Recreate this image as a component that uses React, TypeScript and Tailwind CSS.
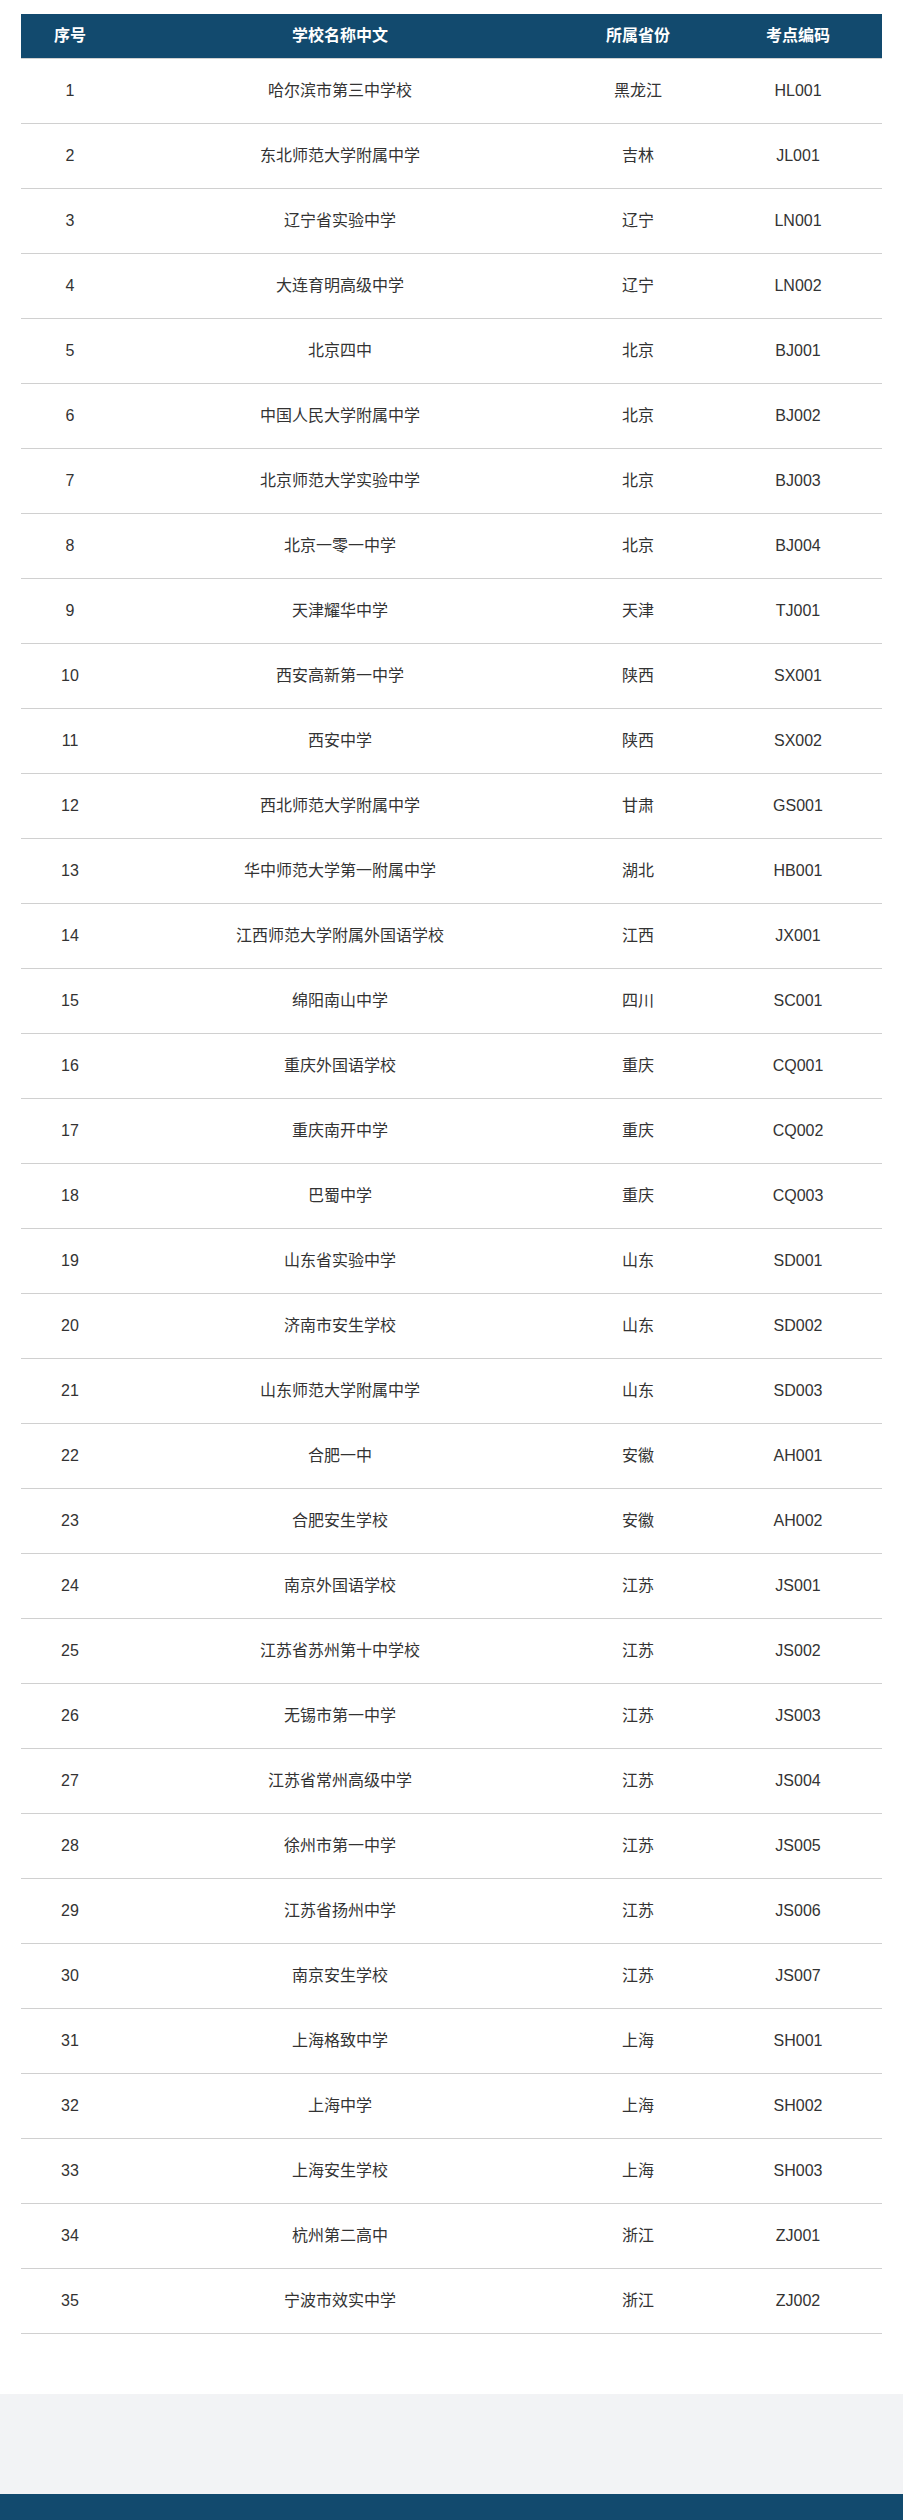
const schools: [string, string, string][] = [
  ["哈尔滨市第三中学校", "黑龙江", "HL001"],
  ["东北师范大学附属中学", "吉林", "JL001"],
  ["辽宁省实验中学", "辽宁", "LN001"],
  ["大连育明高级中学", "辽宁", "LN002"],
  ["北京四中", "北京", "BJ001"],
  ["中国人民大学附属中学", "北京", "BJ002"],
  ["北京师范大学实验中学", "北京", "BJ003"],
  ["北京一零一中学", "北京", "BJ004"],
  ["天津耀华中学", "天津", "TJ001"],
  ["西安高新第一中学", "陕西", "SX001"],
  ["西安中学", "陕西", "SX002"],
  ["西北师范大学附属中学", "甘肃", "GS001"],
  ["华中师范大学第一附属中学", "湖北", "HB001"],
  ["江西师范大学附属外国语学校", "江西", "JX001"],
  ["绵阳南山中学", "四川", "SC001"],
  ["重庆外国语学校", "重庆", "CQ001"],
  ["重庆南开中学", "重庆", "CQ002"],
  ["巴蜀中学", "重庆", "CQ003"],
  ["山东省实验中学", "山东", "SD001"],
  ["济南市安生学校", "山东", "SD002"],
  ["山东师范大学附属中学", "山东", "SD003"],
  ["合肥一中", "安徽", "AH001"],
  ["合肥安生学校", "安徽", "AH002"],
  ["南京外国语学校", "江苏", "JS001"],
  ["江苏省苏州第十中学校", "江苏", "JS002"],
  ["无锡市第一中学", "江苏", "JS003"],
  ["江苏省常州高级中学", "江苏", "JS004"],
  ["徐州市第一中学", "江苏", "JS005"],
  ["江苏省扬州中学", "江苏", "JS006"],
  ["南京安生学校", "江苏", "JS007"],
  ["上海格致中学", "上海", "SH001"],
  ["上海中学", "上海", "SH002"],
  ["上海安生学校", "上海", "SH003"],
  ["杭州第二高中", "浙江", "ZJ001"],
  ["宁波市效实中学", "浙江", "ZJ002"],
];

const cols = "grid grid-cols-[98px_442px_154px_166px]";

export default function App() {
  return (
    <div className="min-h-[2520px] bg-white font-['Liberation_Sans','Noto_Sans_CJK_SC',sans-serif] text-[16px] text-[#333]">
      <div className="px-[21px] pt-[14px] pb-[60px]">
        <div className={`${cols} h-[45px] bg-[#124a6e] border-b border-[#d0d0d0] text-white font-bold`}>
          <div className="flex items-center justify-center">序号</div>
          <div className="flex items-center justify-center">学校名称中文</div>
          <div className="flex items-center justify-center">所属省份</div>
          <div className="flex items-center justify-center">考点编码</div>
        </div>
        {schools.map(([name, prov, code], i) => (
          <div key={code} className={`${cols} h-[65px] border-b border-[#d0d0d0]`}>
            <div className="flex items-center justify-center">{i + 1}</div>
            <div className="flex items-center justify-center">{name}</div>
            <div className="flex items-center justify-center">{prov}</div>
            <div className="flex items-center justify-center">{code}</div>
          </div>
        ))}
      </div>
      <div className="h-[100px] bg-[#f2f3f5]" />
      <div className="h-[60px] bg-[#124a6e]" />
    </div>
  );
}
